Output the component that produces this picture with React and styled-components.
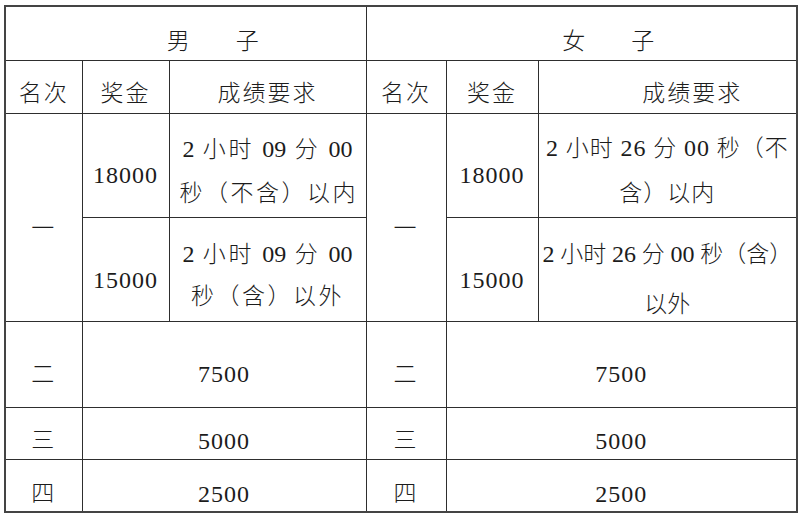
import React from "react";
import styled, { createGlobalStyle } from "styled-components";

const GlobalStyle = createGlobalStyle`
  html, body {
    margin: 0;
    padding: 0;
    background: #fff;
  }
  body {
    font-family: "Liberation Serif", "Noto Sans CJK SC", serif;
    color: #1c1c1c;
  }
`;

const Page = styled.div`
  width: 800px;
  height: 518px;
  padding: 5px 0 0 4px;
  box-sizing: border-box;
  overflow: hidden;
`;

const Table = styled.table`
  width: 792px;
  table-layout: fixed;
  border-collapse: collapse;
  border: 2px solid #444;
  font-family: "Liberation Serif", "Noto Sans CJK SC", serif;
  font-size: 23px;
  font-weight: 300;
  color: #1c1c1c;
`;

const Row = styled.tr`
  height: ${(p) => p.$h}px;
`;

const Cell = styled.td`
  border: 1px solid #2e2e2e;
  padding: ${(p) => p.$pt ?? 18}px ${(p) => p.$pr ?? 0}px 0 ${(p) => p.$pl ?? 0}px;
  text-align: center;
  vertical-align: middle;
  letter-spacing: ${(p) => p.$ls ?? 2}px;
  line-height: 28px;
  white-space: nowrap;
  overflow: hidden;
`;

// digits are set in a Times-like face, as in the source document
const Num = styled.span`
  font-family: "Liberation Serif", "Times New Roman", serif;
  font-size: 24px;
  font-weight: 400;
`;

const Lines = styled.div`
  line-height: ${(p) => p.$lh}px;
  margin-bottom: ${(p) => p.$mb ?? 0}px;
`;

const Line = styled.div`
  letter-spacing: ${(p) => p.$ls ?? 0}px;
  text-align: ${(p) => (p.$justify ? "justify" : "center")};
  text-align-last: ${(p) => (p.$justify ? "justify" : "center")};
  padding: 0 ${(p) => p.$px ?? 0}px;
`;

const cols = [77, 87, 197, 80, 92, 259];

export default function App() {
  return (
    <Page>
      <GlobalStyle />
      <Table>
        <colgroup>
          {cols.map((w, i) => (
            <col key={i} style={{ width: w }} />
          ))}
        </colgroup>
        <tbody>
          <Row $h={54}>
            <Cell colSpan={3} $pl={54} $ls={0}>男　　子</Cell>
            <Cell colSpan={3} $pl={54} $ls={0}>女　　子</Cell>
          </Row>
          <Row $h={53}>
            <Cell $pt={14}>名次</Cell>
            <Cell $pt={14}>奖金</Cell>
            <Cell $pt={14}>成绩要求</Cell>
            <Cell $pt={14}>名次</Cell>
            <Cell $pt={14}>奖金</Cell>
            <Cell $pt={14} $pl={50}>成绩要求</Cell>
          </Row>
          <Row $h={104}>
            <Cell rowSpan={2} $pt={24}>一</Cell>
            <Cell $pt={20} $ls={1}><Num>18000</Num></Cell>
            <Cell $pt={12} $ls={0}>
              <Lines $lh={44}>
                <Line $justify $px={13}>
                  <Num>2</Num> 小时 <Num>09</Num> 分 <Num>00</Num>
                </Line>
                <Line $justify $px={10}>秒（不含）以内</Line>
              </Lines>
            </Cell>
            <Cell rowSpan={2} $pt={24}>一</Cell>
            <Cell $pt={20} $ls={1}><Num>18000</Num></Cell>
            <Cell $pt={12} $ls={0}>
              <Lines $lh={45}>
                <Line $ls={1}>
                  <Num>2</Num> 小时 <Num>26</Num> 分 <Num>00</Num> 秒（不
                </Line>
                <Line $ls={1}>含）以内</Line>
              </Lines>
            </Cell>
          </Row>
          <Row $h={104}>
            <Cell $pt={22} $ls={1}><Num>15000</Num></Cell>
            <Cell $pt={12} $ls={0}>
              <Lines $lh={42}>
                <Line $justify $px={13}>
                  <Num>2</Num> 小时 <Num>09</Num> 分 <Num>00</Num>
                </Line>
                <Line $ls={2.5}>秒（含）以外</Line>
              </Lines>
            </Cell>
            <Cell $pt={22} $ls={1}><Num>15000</Num></Cell>
            <Cell $pt={6} $ls={0}>
              <Lines $lh={50} $mb={-14}>
                <Line>
                  <Num>2</Num> 小时 <Num>26</Num> 分 <Num>00</Num> 秒（含）
                </Line>
                <Line>以外</Line>
              </Lines>
            </Cell>
          </Row>
          <Row $h={86}>
            <Cell $pt={21}>二</Cell>
            <Cell colSpan={2} $pt={21} $ls={1}><Num>7500</Num></Cell>
            <Cell $pt={21}>二</Cell>
            <Cell colSpan={2} $pt={21} $ls={1}><Num>7500</Num></Cell>
          </Row>
          <Row $h={52}>
            <Cell $pt={16}>三</Cell>
            <Cell colSpan={2} $pt={16} $ls={1}><Num>5000</Num></Cell>
            <Cell $pt={16}>三</Cell>
            <Cell colSpan={2} $pt={16} $ls={1}><Num>5000</Num></Cell>
          </Row>
          <Row $h={53}>
            <Cell $pt={18}>四</Cell>
            <Cell colSpan={2} $pt={18} $ls={1}><Num>2500</Num></Cell>
            <Cell $pt={18}>四</Cell>
            <Cell colSpan={2} $pt={18} $ls={1}><Num>2500</Num></Cell>
          </Row>
        </tbody>
      </Table>
    </Page>
  );
}
